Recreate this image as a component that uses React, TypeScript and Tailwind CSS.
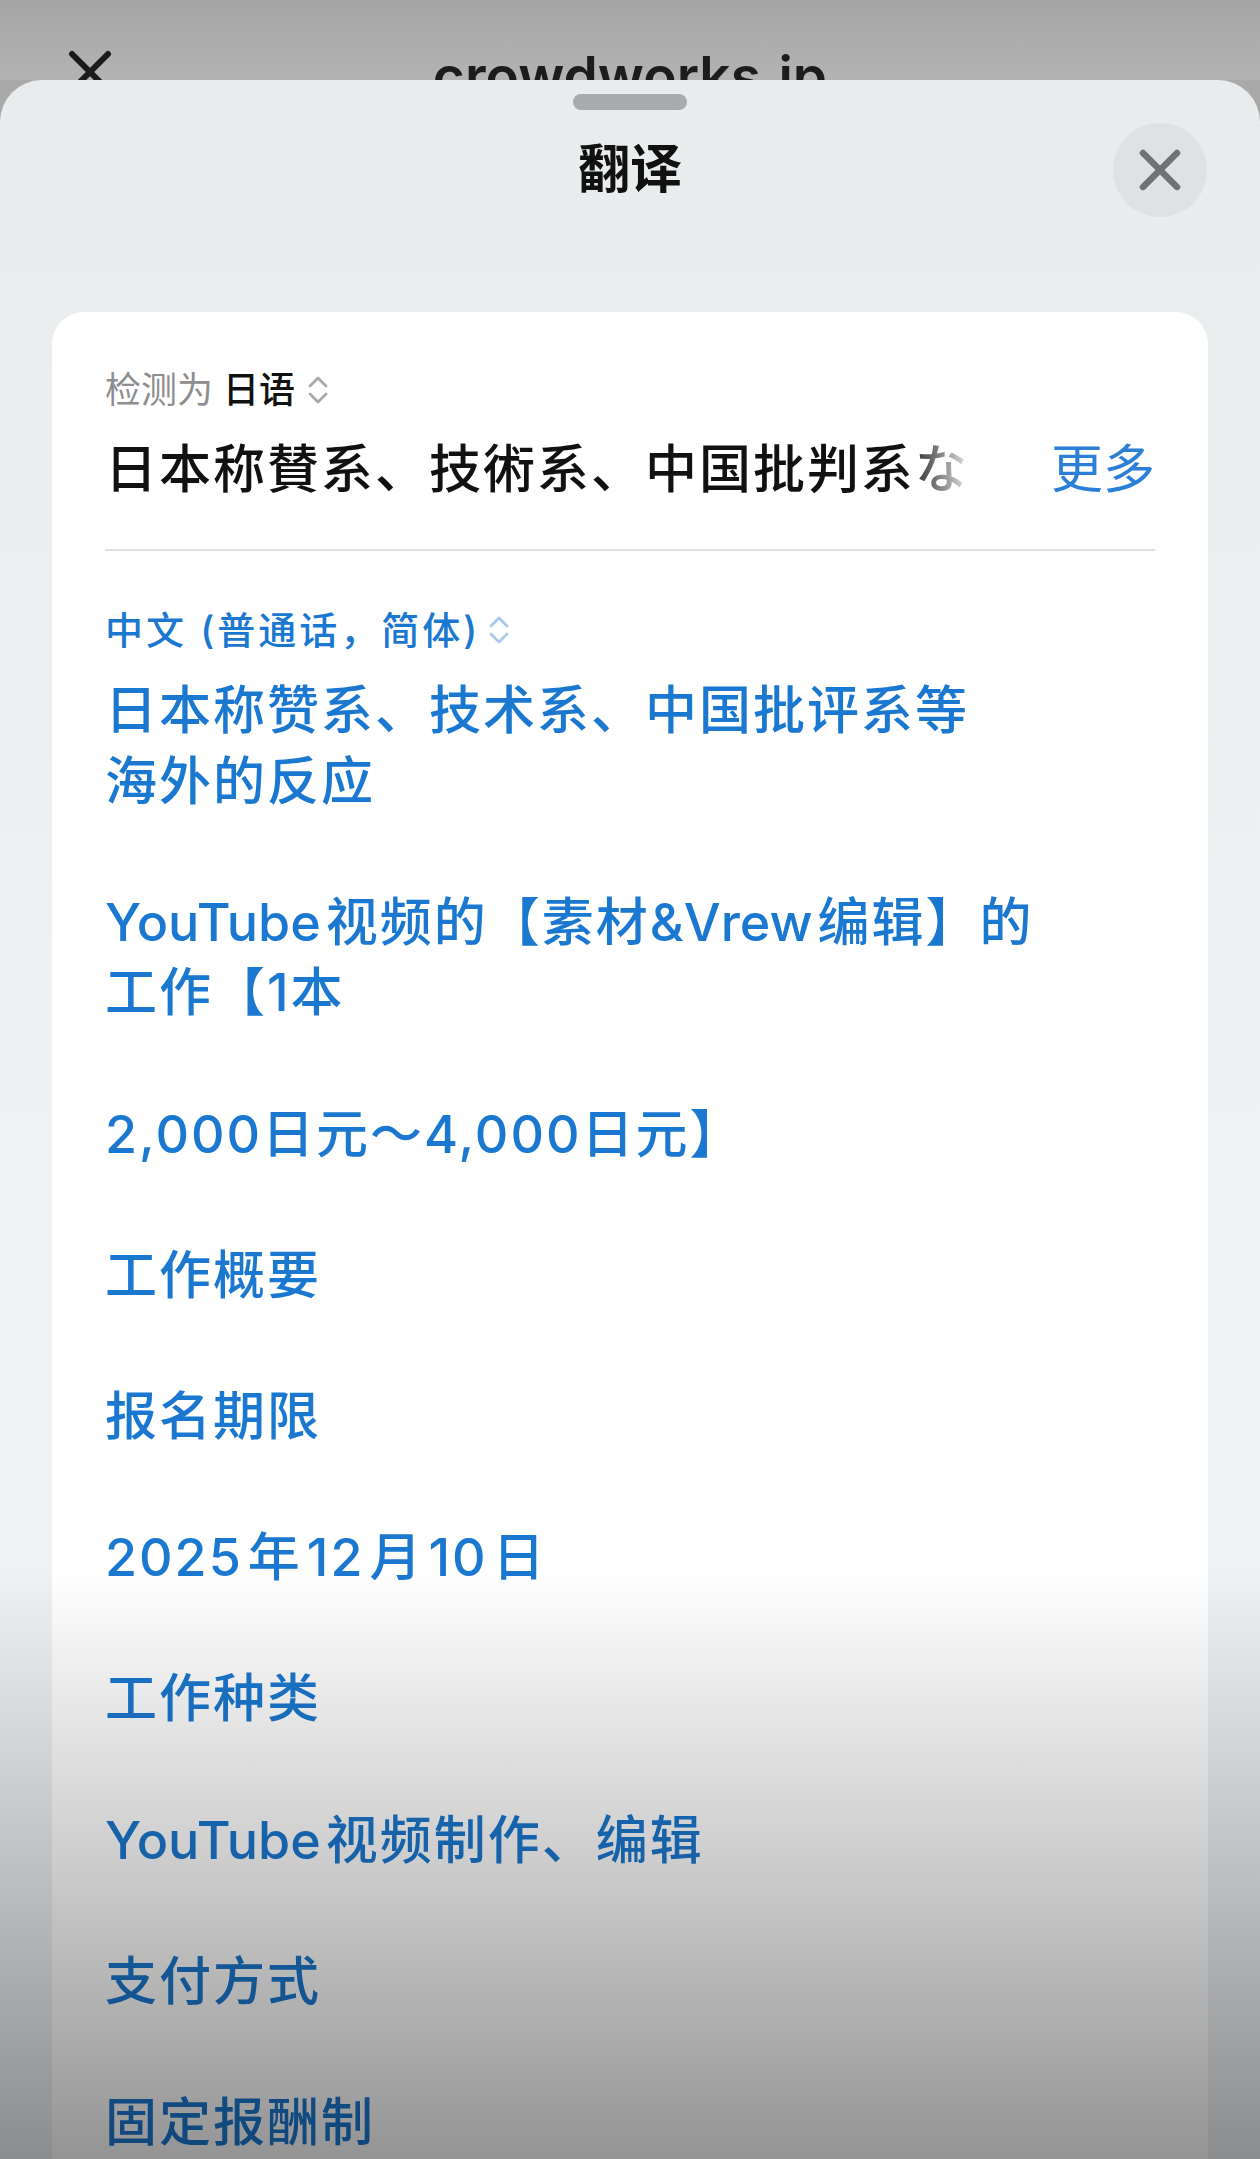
const paragraphs: string[][] = [
    ["日本称赞系、技术系、中国批评系等", "海外的反应"],
    ["YouTube|视频的【素材&Vrew|编辑】的", "工作【1本"],
    ["2,000日元～4,000日元】"],
    ["工作概要"],
    ["报名期限"],
    ["2025|年|12|月|10|日"],
    ["工作种类"],
    ["YouTube|视频制作、编辑"],
    ["支付方式"],
    ["固定报酬制"],
];

const font = "font-['Inter','Noto_Sans_CJK_SC',sans-serif]";

// "|" marks the small gap iOS puts between latin and CJK runs,
// latin words get no extra tracking
function Line({ text }: { text: string }) {
    const parts = text.split("|");
    return (
        <>
            {parts.map((p, i) => (
                <span key={i}>
                    {i > 0 && <span className="inline-block w-[5px]" />}
                    {p.split(/([A-Za-z&]+)/).map((seg, j) =>
                        /[A-Za-z]/.test(seg) ? (
                            <span key={j} className="tracking-normal">
                                {seg}
                            </span>
                        ) : (
                            <span key={j}>{seg}</span>
                        )
                    )}
                </span>
            ))}
        </>
    );
}

function UpDown({ color }: { color: string }) {
    return (
        <svg width="26" height="36" viewBox="0 0 26 36" fill="none" className="shrink-0">
            <path d="M5 14 L13 6 L21 14" stroke={color} strokeWidth="2.8" strokeLinecap="round" strokeLinejoin="round" />
            <path d="M5 22 L13 30 L21 22" stroke={color} strokeWidth="2.8" strokeLinecap="round" strokeLinejoin="round" />
        </svg>
    );
}

export default function App() {
    return (
        <div className={`relative h-[2159px] w-[1260px] overflow-hidden bg-[#a9a9a9] ${font}`}>
            {/* page behind the sheet */}
            <div className="relative h-[80px] overflow-hidden bg-gradient-to-b from-[#a5a5a5] to-[#b3b3b3]">
                <svg width="44" height="44" viewBox="0 0 44 44" className="absolute left-[68px] top-[50px]">
                    <path d="M4 4 L40 40 M40 4 L4 40" stroke="#1b1b1b" strokeWidth="6" strokeLinecap="round" />
                </svg>
                <div className="pt-[44px] text-center text-[55px] font-semibold leading-[64px] text-[#1c1c1c]">
                    crowdworks.jp
                </div>
            </div>

            {/* sheet */}
            <div className="flex h-[2079px] flex-col rounded-t-[42px] bg-gradient-to-b from-[#e9eced] via-[#eef2f4] to-[#eef2f5]">
                <div className="mx-auto mt-[14px] h-[16px] w-[114px] rounded-full bg-[#a9abad]" />

                <div className="relative mt-[5px] flex h-[110px] items-center justify-center">
                    <h1 className="text-[52px] font-semibold text-[#111]">翻译</h1>
                    <button className="absolute right-[53px] top-1/2 flex h-[94px] w-[94px] -translate-y-1/2 items-center justify-center rounded-full bg-[#dfe1e3]">
                        <svg width="42" height="42" viewBox="0 0 42 42">
                            <path d="M4 4 L38 38 M38 4 L4 38" stroke="#707274" strokeWidth="6.5" strokeLinecap="round" />
                        </svg>
                    </button>
                </div>

                <div className="mx-[52px] mt-[87px] flex-1 rounded-t-[32px] bg-white px-[53px] pt-[53px]">
                    {/* source */}
                    <div className="flex items-center gap-[10px] text-[36px] leading-[50px]">
                        <span className="text-[#8e8e90]">检测为</span>
                        <span className="font-medium text-[#111]">日语</span>
                        <UpDown color="#a9a9ab" />
                    </div>
                    <div className="mt-[19px] flex items-center text-[52px] font-medium leading-[72px] tracking-[2px]">
                        <div className="w-[872px] overflow-hidden whitespace-nowrap text-[#111] [mask-image:linear-gradient(to_right,black_800px,transparent_872px)]">
                            日本称賛系、技術系、中国批判系など海外の反応
                        </div>
                        <span className="ml-auto font-normal tracking-normal text-[#2b7fd6]">更多</span>
                    </div>

                    <div className="mt-[43px] h-[2px] bg-[#e0e0e2]" />

                    {/* target */}
                    <div className="mt-[54px] flex items-center gap-[6px] text-[38px] font-medium leading-[50px] tracking-[3px] text-[#1b78d0]">
                        <span>中文 (普通话，简体)</span>
                        <UpDown color="#a9c8ec" />
                    </div>
                    <div className="mt-[21px] flex flex-col gap-[70.6px] text-[52px] font-medium leading-[70.6px] tracking-[2px] text-[#1b78d0]">
                        {paragraphs.map((lines) => (
                            <p key={lines.join("")}>
                                {lines.map((l, i) => (
                                    <span key={l}>
                                        {i > 0 && <br />}
                                        <Line text={l} />
                                    </span>
                                ))}
                            </p>
                        ))}
                    </div>
                </div>
            </div>

            {/* video fade at the bottom */}
            <div className="pointer-events-none absolute bottom-0 left-0 h-[590px] w-full bg-gradient-to-b from-transparent via-black/20 to-black/42" />
        </div>
    );
}
